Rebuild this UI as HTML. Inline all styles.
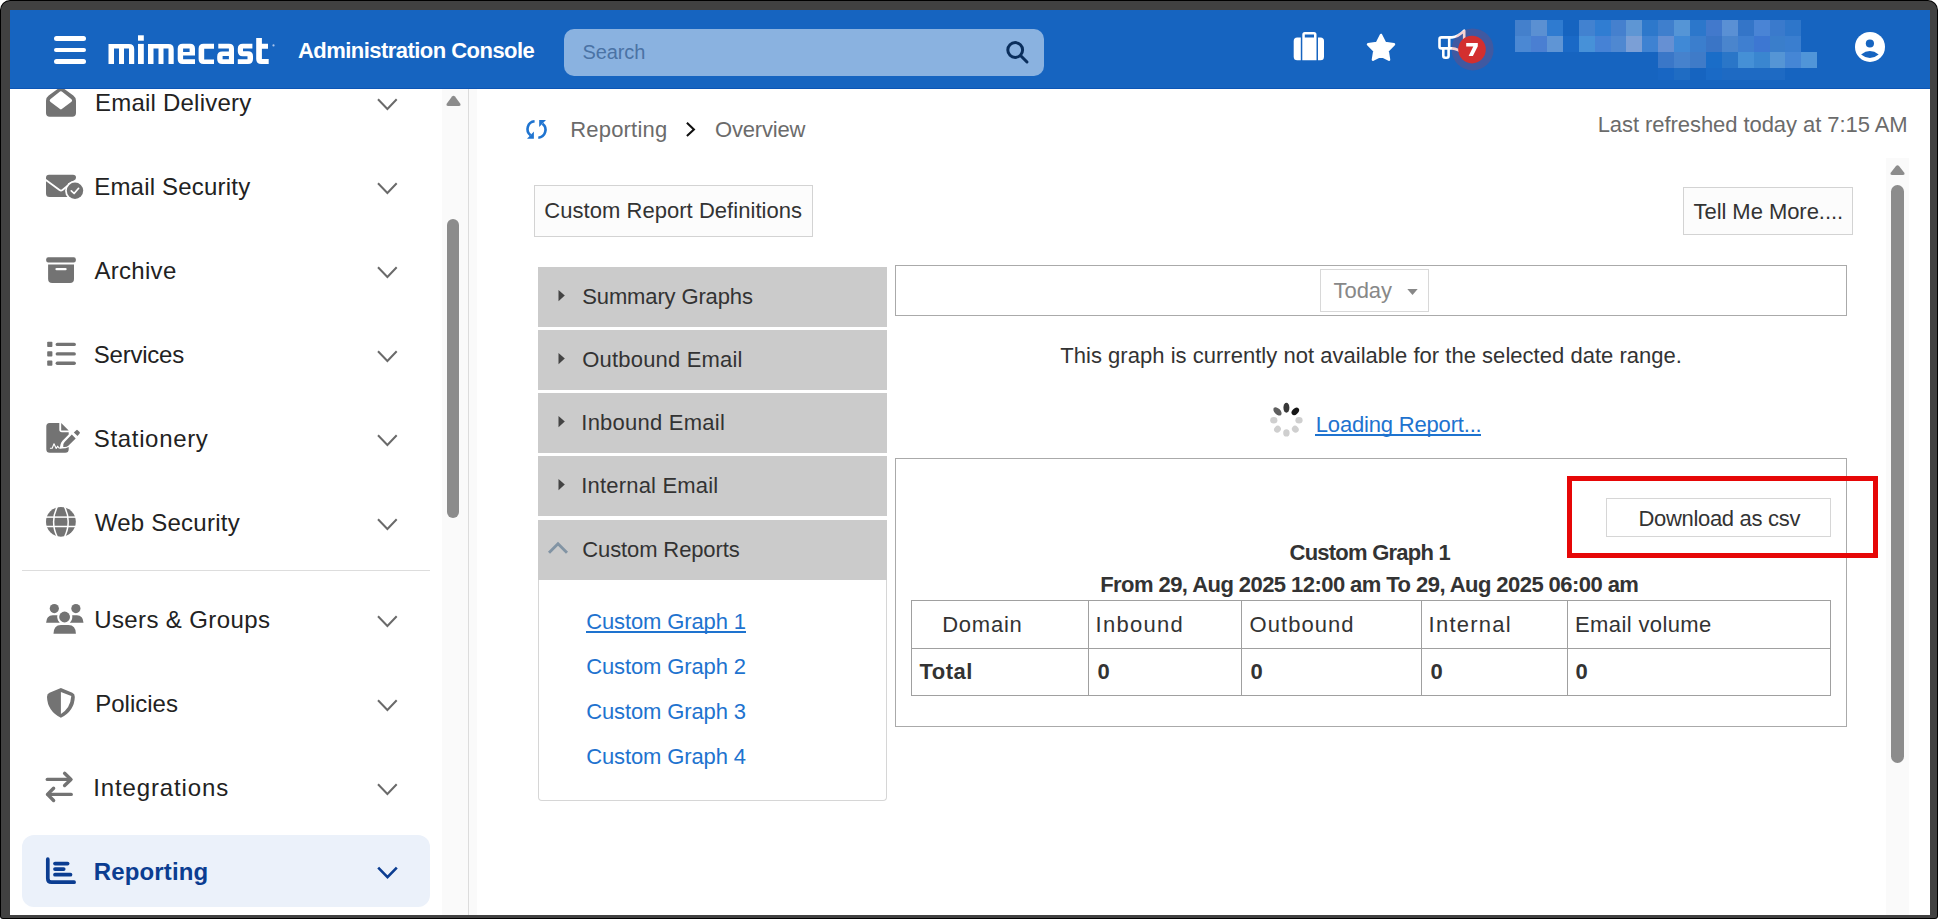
<!DOCTYPE html>
<html><head><meta charset="utf-8"><style>
html,body{margin:0;padding:0;width:1939px;height:920px;overflow:hidden;background:#fff;}
*{box-sizing:border-box;}
body{font-family:"Liberation Sans",sans-serif;position:relative;}
.abs{position:absolute;}
.t{position:absolute;white-space:pre;line-height:1;font-family:"Liberation Sans",sans-serif;}
svg{overflow:visible}
</style></head><body>
<div class="abs" style="left:0px;top:0px;width:1938px;height:919px;background:#000;border-radius:10px 10px 3px 3px"></div>
<div class="abs" style="left:1px;top:1px;width:1936px;height:917px;background:#414141;border-radius:9px 9px 2px 2px"></div>
<div class="abs" style="left:10px;top:10px;width:1920px;height:905px;background:#fff;"></div>
<div class="abs" style="left:10px;top:10px;width:1920px;height:79px;background:#1664c0;"></div>
<div class="abs" style="left:10px;top:88px;width:1920px;height:1px;background:#0c55b5;"></div>
<div class="abs" style="left:54px;top:36.2px;width:32px;height:4.7px;background:#fff;border-radius:3px"></div>
<div class="abs" style="left:54px;top:47.5px;width:32px;height:4.7px;background:#fff;border-radius:3px"></div>
<div class="abs" style="left:54px;top:58.9px;width:32px;height:4.7px;background:#fff;border-radius:3px"></div>
<svg class="abs" style="left:0px;top:0px" width="1" height="1" viewBox="0 0 1 1"><g fill="#fff">
<path d="M108.5,64 V43.9 H129 Q134.2,43.9 134.2,49 V64 H129 V48.6 H124 V64 H119 V48.6 H114 V64 Z"/>
<rect x="138" y="43.9" width="5.8" height="20.1"/><rect x="138" y="35.3" width="5.8" height="5.4"/>
<path transform="translate(39.5,0)" d="M108.5,64 V43.9 H129 Q134.2,43.9 134.2,49 V64 H129 V48.6 H124 V64 H119 V48.6 H114 V64 Z"/>
<path fill-rule="evenodd" d="M182.7,43.8 H190 Q195,43.8 195,48.8 V55.4 H183.1 V59.2 H195 V64.1 H182.7 Q177.7,64.1 177.7,59.1 V48.8 Q177.7,43.8 182.7,43.8 Z M183.1,48.4 H189.6 V51.9 H183.1 Z"/>
<path d="M203.6,43.8 H214 V48.7 H204.2 V59.5 H214 V64.1 H203.6 Q198.6,64.1 198.6,59.1 V48.8 Q198.6,43.8 203.6,43.8 Z"/>
<path fill-rule="evenodd" d="M218.3,43.8 H229 Q234,43.8 234,48.8 V64.1 H222.2 Q217.2,64.1 217.2,59.1 V56.5 Q217.2,51.6 222.2,51.6 H228.9 V48.6 H218.3 Z M222.6,56 H228.9 V59.2 H222.6 Z"/>
<path d="M242.8,43.8 H252.4 V48.4 H243 V51.2 H248 Q253,51.2 253,56.2 V59.1 Q253,64.1 248,64.1 H237.8 V59.2 H247.5 V56.2 H242.8 Q237.8,56.2 237.8,51.2 V48.8 Q237.8,43.8 242.8,43.8 Z"/>
<path d="M256.2,37.9 H261.9 V43.8 H268 V48.7 H261.9 V59 H268.7 V64.1 H261.2 Q256.2,64.1 256.2,59.1 Z"/>
</g><circle cx="273.5" cy="45.4" r="1.1" fill="#a9c4ec"/></svg>
<div class="t" style="left:297.90px;top:39.98px;font-size:22px;color:#fff;font-weight:bold;letter-spacing:-0.533px;">Administration Console</div>
<div class="abs" style="left:564px;top:29px;width:480px;height:47px;background:#8ab2e0;border-radius:10px"></div>
<div class="t" style="left:582.60px;top:41.97px;font-size:20px;color:#4a73a5;font-weight:normal;letter-spacing:-0.129px;">Search</div>
<svg class="abs" style="left:0px;top:0px" width="1" height="1" viewBox="0 0 1 1"><g stroke="#0a2e5c" stroke-width="3" fill="none" stroke-linecap="round"><circle cx="1015.2" cy="50" r="7.4"/><line x1="1021" y1="56" x2="1027" y2="62"/></g></svg>
<svg class="abs" style="left:0px;top:0px" width="1" height="1" viewBox="0 0 1 1"><g fill="#fff"><path d="M1297.2,37.6 H1300.8 V60.3 H1297.2 Q1293.7,60.3 1293.7,56.8 V41.1 Q1293.7,37.6 1297.2,37.6 Z"/><path d="M1318,37.6 H1320.5 Q1324,37.6 1324,41.1 V56.8 Q1324,60.3 1320.5,60.3 H1318 Z"/><path fill-rule="evenodd" d="M1304.8,31.9 H1314 Q1316.5,31.9 1316.5,34.4 V60.3 H1302.3 V34.4 Q1302.3,31.9 1304.8,31.9 Z M1304.8,34.6 H1314 V37.6 H1304.8 Z"/></g></svg>
<svg class="abs" style="left:0px;top:0px" width="1" height="1" viewBox="0 0 1 1"><polygon points="1381.00,35.00 1385.06,43.02 1393.93,44.40 1387.56,50.73 1388.99,59.60 1381.00,55.50 1373.01,59.60 1374.44,50.73 1368.07,44.40 1376.94,43.02" fill="#fff" stroke="#fff" stroke-width="2.6" stroke-linejoin="round"/></svg>
<svg class="abs" style="left:0px;top:0px" width="1" height="1" viewBox="0 0 1 1"><g fill="none" stroke="#fff" stroke-width="2.6" stroke-linejoin="round"><path d="M1441.5,37.4 H1452 Q1458,37 1464.2,30.6 V54 Q1458,49 1452,48.4 H1441.5 Q1439.5,48.4 1439.5,46.4 V39.4 Q1439.5,37.4 1441.5,37.4 Z"/><path d="M1443.3,48.4 V55.8 Q1443.3,57.8 1445.3,57.8 H1446.6 Q1448.6,57.8 1448.6,55.8 V48.4"/><line x1="1449.2" y1="37.4" x2="1449.2" y2="48.4"/></g></svg>
<svg class="abs" style="left:0px;top:0px" width="1" height="1" viewBox="0 0 1 1"><circle cx="1472.6" cy="49.4" r="21" fill="rgb(214,48,50)" fill-opacity="0.22"/><circle cx="1472" cy="49.6" r="13.8" fill="#d32f2f"/></svg>
<svg class="abs" style="left:0px;top:0px" width="1" height="1" viewBox="0 0 1 1"><path fill="#fff" d="M1466.2,43.1 H1477.8 V46.2 L1472.9,55.9 H1468.6 L1473.3,46.5 H1466.2 Z"/></svg>
<svg class="abs" style="left:0px;top:0px" width="1" height="1" viewBox="0 0 1 1"><g shape-rendering="crispEdges"><rect x="1515.10" y="20.10" width="15.9" height="15.9" fill="#4480cc"/><rect x="1531.00" y="20.10" width="15.9" height="15.9" fill="#5b90d2"/><rect x="1546.90" y="20.10" width="15.9" height="15.9" fill="#2f7bd0"/><rect x="1578.70" y="20.10" width="15.9" height="15.9" fill="#4282d0"/><rect x="1594.60" y="20.10" width="15.9" height="15.9" fill="#307dd2"/><rect x="1610.50" y="20.10" width="15.9" height="15.9" fill="#4580ce"/><rect x="1626.40" y="20.10" width="15.9" height="15.9" fill="#5e96d4"/><rect x="1642.30" y="20.10" width="15.9" height="15.9" fill="#2d78cb"/><rect x="1658.20" y="20.10" width="15.9" height="15.9" fill="#3f7fcd"/><rect x="1674.10" y="20.10" width="15.9" height="15.9" fill="#5595d6"/><rect x="1690.00" y="20.10" width="15.9" height="15.9" fill="#2c77cb"/><rect x="1705.90" y="20.10" width="15.9" height="15.9" fill="#4279cc"/><rect x="1721.80" y="20.10" width="15.9" height="15.9" fill="#5a90d4"/><rect x="1737.70" y="20.10" width="15.9" height="15.9" fill="#3475c8"/><rect x="1753.60" y="20.10" width="15.9" height="15.9" fill="#4a84d5"/><rect x="1769.50" y="20.10" width="15.9" height="15.9" fill="#3a7acc"/><rect x="1785.40" y="20.10" width="15.9" height="15.9" fill="#2e76ca"/><rect x="1515.10" y="36.00" width="15.9" height="15.9" fill="#4b88d3"/><rect x="1531.00" y="36.00" width="15.9" height="15.9" fill="#4a7fd2"/><rect x="1546.90" y="36.00" width="15.9" height="15.9" fill="#5f95d5"/><rect x="1562.80" y="36.00" width="15.9" height="15.9" fill="#1a69c6"/><rect x="1578.70" y="36.00" width="15.9" height="15.9" fill="#4791d8"/><rect x="1594.60" y="36.00" width="15.9" height="15.9" fill="#4682d5"/><rect x="1610.50" y="36.00" width="15.9" height="15.9" fill="#4f88d1"/><rect x="1626.40" y="36.00" width="15.9" height="15.9" fill="#7b9fd6"/><rect x="1642.30" y="36.00" width="15.9" height="15.9" fill="#3e82d2"/><rect x="1658.20" y="36.00" width="15.9" height="15.9" fill="#6690d3"/><rect x="1674.10" y="36.00" width="15.9" height="15.9" fill="#4089d6"/><rect x="1690.00" y="36.00" width="15.9" height="15.9" fill="#3b7ecd"/><rect x="1705.90" y="36.00" width="15.9" height="15.9" fill="#3a75c6"/><rect x="1721.80" y="36.00" width="15.9" height="15.9" fill="#4a85cd"/><rect x="1737.70" y="36.00" width="15.9" height="15.9" fill="#3f7fd0"/><rect x="1753.60" y="36.00" width="15.9" height="15.9" fill="#3d77d2"/><rect x="1769.50" y="36.00" width="15.9" height="15.9" fill="#3a7ecb"/><rect x="1785.40" y="36.00" width="15.9" height="15.9" fill="#3a7ecf"/><rect x="1658.20" y="51.90" width="15.9" height="15.9" fill="#3a77c8"/><rect x="1674.10" y="51.90" width="15.9" height="15.9" fill="#4682cd"/><rect x="1690.00" y="51.90" width="15.9" height="15.9" fill="#3f7bc8"/><rect x="1705.90" y="51.90" width="15.9" height="15.9" fill="#1a6dc8"/><rect x="1721.80" y="51.90" width="15.9" height="15.9" fill="#2a76c8"/><rect x="1737.70" y="51.90" width="15.9" height="15.9" fill="#4590d6"/><rect x="1753.60" y="51.90" width="15.9" height="15.9" fill="#3a86d0"/><rect x="1769.50" y="51.90" width="15.9" height="15.9" fill="#5595d5"/><rect x="1785.40" y="51.90" width="15.9" height="15.9" fill="#4586d5"/><rect x="1801.30" y="51.90" width="15.9" height="15.9" fill="#5095d8"/><rect x="1658.20" y="67.80" width="15.9" height="12" fill="#1866c3"/><rect x="1674.10" y="67.80" width="15.9" height="12" fill="#1f6cc3"/><rect x="1705.90" y="67.80" width="15.9" height="12" fill="#1a6ac6"/><rect x="1721.80" y="67.80" width="15.9" height="12" fill="#1e6ac3"/><rect x="1737.70" y="67.80" width="15.9" height="12" fill="#1e6ac3"/><rect x="1753.60" y="67.80" width="15.9" height="12" fill="#1e6ac3"/><rect x="1769.50" y="67.80" width="15.9" height="12" fill="#1e6ac3"/></g></svg>
<svg class="abs" style="left:0px;top:0px" width="1" height="1" viewBox="0 0 1 1"><circle cx="1870" cy="46.9" r="15" fill="#fff"/><circle cx="1869.9" cy="43.5" r="4.1" fill="#1664c0"/><path fill="#1664c0" d="M1861.1,54.4 Q1869.9,47.5 1878.7,54.4 Q1869.9,61.5 1861.1,54.4 Z"/></svg>
<div class="abs" style="left:22px;top:835px;width:408px;height:72px;background:#ebf1fa;border-radius:12px"></div>
<div class="t" style="left:95.00px;top:90.58px;font-size:24px;color:#222;font-weight:normal;letter-spacing:0.218px;">Email Delivery</div>
<div class="t" style="left:94.20px;top:174.58px;font-size:24px;color:#222;font-weight:normal;letter-spacing:0.202px;">Email Security</div>
<div class="t" style="left:94.40px;top:258.58px;font-size:24px;color:#222;font-weight:normal;letter-spacing:0.303px;">Archive</div>
<div class="t" style="left:93.80px;top:342.58px;font-size:24px;color:#222;font-weight:normal;letter-spacing:-0.232px;">Services</div>
<div class="t" style="left:93.80px;top:426.58px;font-size:24px;color:#222;font-weight:normal;letter-spacing:0.660px;">Stationery</div>
<div class="t" style="left:94.70px;top:510.58px;font-size:24px;color:#222;font-weight:normal;letter-spacing:0.248px;">Web Security</div>
<div class="t" style="left:94.20px;top:607.58px;font-size:24px;color:#222;font-weight:normal;letter-spacing:0.383px;">Users &amp; Groups</div>
<div class="t" style="left:95.20px;top:691.58px;font-size:24px;color:#222;font-weight:normal;letter-spacing:0.014px;">Policies</div>
<div class="t" style="left:93.20px;top:775.58px;font-size:24px;color:#222;font-weight:normal;letter-spacing:0.871px;">Integrations</div>
<div class="t" style="left:93.80px;top:859.58px;font-size:24px;color:#0b3d91;font-weight:bold;letter-spacing:0.130px;">Reporting</div>
<div class="abs" style="left:22px;top:570px;width:408px;height:1px;background:#dddddd;"></div>
<div class="abs" style="left:442px;top:89px;width:26px;height:826px;background:#fafafa;"></div>
<div class="abs" style="left:468px;top:89px;width:1px;height:826px;background:#dcdcdc;"></div>
<div class="abs" style="left:469px;top:89px;width:8px;height:826px;background:#fafafa;"></div>
<div class="abs" style="left:447px;top:219px;width:12px;height:299px;background:#8c8c8c;border-radius:6px"></div>
<svg class="abs" style="left:0px;top:0px" width="1" height="1" viewBox="0 0 1 1"><polyline points="378,99.3 387.4,109.0 396.7,99.3" fill="none" stroke="#6a6a6a" stroke-width="2"/></svg>
<svg class="abs" style="left:0px;top:0px" width="1" height="1" viewBox="0 0 1 1"><polyline points="378,183.3 387.4,193.0 396.7,183.3" fill="none" stroke="#6a6a6a" stroke-width="2"/></svg>
<svg class="abs" style="left:0px;top:0px" width="1" height="1" viewBox="0 0 1 1"><polyline points="378,267.3 387.4,277.0 396.7,267.3" fill="none" stroke="#6a6a6a" stroke-width="2"/></svg>
<svg class="abs" style="left:0px;top:0px" width="1" height="1" viewBox="0 0 1 1"><polyline points="378,351.3 387.4,361.0 396.7,351.3" fill="none" stroke="#6a6a6a" stroke-width="2"/></svg>
<svg class="abs" style="left:0px;top:0px" width="1" height="1" viewBox="0 0 1 1"><polyline points="378,435.3 387.4,445.0 396.7,435.3" fill="none" stroke="#6a6a6a" stroke-width="2"/></svg>
<svg class="abs" style="left:0px;top:0px" width="1" height="1" viewBox="0 0 1 1"><polyline points="378,519.3 387.4,529.0 396.7,519.3" fill="none" stroke="#6a6a6a" stroke-width="2"/></svg>
<svg class="abs" style="left:0px;top:0px" width="1" height="1" viewBox="0 0 1 1"><polyline points="378,616.3 387.4,626.0 396.7,616.3" fill="none" stroke="#6a6a6a" stroke-width="2"/></svg>
<svg class="abs" style="left:0px;top:0px" width="1" height="1" viewBox="0 0 1 1"><polyline points="378,700.3 387.4,710.0 396.7,700.3" fill="none" stroke="#6a6a6a" stroke-width="2"/></svg>
<svg class="abs" style="left:0px;top:0px" width="1" height="1" viewBox="0 0 1 1"><polyline points="378,784.3 387.4,794.0 396.7,784.3" fill="none" stroke="#6a6a6a" stroke-width="2"/></svg>
<svg class="abs" style="left:0px;top:0px" width="1" height="1" viewBox="0 0 1 1"><polyline points="378.2,867.6 387.5,877.2 396.8,867.6" fill="none" stroke="#0b3d91" stroke-width="2.6"/></svg>
<svg class="abs" style="left:0px;top:0px" width="1" height="1" viewBox="0 0 1 1"><path fill="#737373" fill-rule="evenodd" d="M57.6,89 H64.4 L73.3,95.6 Q76,97.6 76,100.8 V113 Q76,116.7 72.3,116.7 H49.7 Q46,116.7 46,113 V100.8 Q46,97.6 48.7,95.6 Z M50.3,99.3 Q49,100.6 50.3,101.8 L60,109.1 Q60.9,109.8 61.8,109.1 L71.5,101.8 Q72.8,100.6 71.5,99.3 L61.8,91.6 Q60.9,90.9 60,91.6 Z"/></svg>
<svg class="abs" style="left:0px;top:0px" width="1" height="1" viewBox="0 0 1 1"><path fill="#737373" d="M49,174.8 H73 Q76,174.8 76,177.6 Q76,179.5 74.3,180.3 L68,183.5 V197 H49.5 Q46,197 46,193.5 V177.8 Q46,174.8 49,174.8 Z"/><path d="M45.5,179.8 L59.5,190 Q61,191 62.5,190 L68,185.5" fill="none" stroke="#fff" stroke-width="1.8"/><circle cx="75" cy="190.7" r="9.9" fill="#fff"/><circle cx="75" cy="190.7" r="8.2" fill="#737373"/><polyline points="71.3,190.8 74.1,193.5 78.6,188.3" fill="none" stroke="#fff" stroke-width="1.7" stroke-linecap="round" stroke-linejoin="round"/></svg>
<svg class="abs" style="left:0px;top:0px" width="1" height="1" viewBox="0 0 1 1"><rect x="46.2" y="257.2" width="29.6" height="5.3" rx="2" fill="#737373"/><path fill="#737373" d="M48.1,264.4 H74 V279 Q74,283 70,283 H52.1 Q48.1,283 48.1,279 Z"/><rect x="55.4" y="267.9" width="11.3" height="2.4" rx="1.2" fill="#fff"/></svg>
<svg class="abs" style="left:0px;top:0px" width="1" height="1" viewBox="0 0 1 1"><rect x="47.2" y="341.8" width="5.2" height="5.2" rx="0.8" fill="#737373"/><line x1="57.3" y1="344.4" x2="74.2" y2="344.4" stroke="#737373" stroke-width="3.4" stroke-linecap="round"/></svg>
<svg class="abs" style="left:0px;top:0px" width="1" height="1" viewBox="0 0 1 1"><rect x="47.2" y="351.3" width="5.2" height="5.2" rx="0.8" fill="#737373"/><line x1="57.3" y1="353.9" x2="74.2" y2="353.9" stroke="#737373" stroke-width="3.4" stroke-linecap="round"/></svg>
<svg class="abs" style="left:0px;top:0px" width="1" height="1" viewBox="0 0 1 1"><rect x="47.2" y="360.6" width="5.2" height="5.2" rx="0.8" fill="#737373"/><line x1="57.3" y1="363.2" x2="74.2" y2="363.2" stroke="#737373" stroke-width="3.4" stroke-linecap="round"/></svg>
<svg class="abs" style="left:0px;top:0px" width="1" height="1" viewBox="0 0 1 1"><path fill="#737373" d="M49.5,423 H59.3 V429.6 Q59.3,432.3 62,432.3 H68.7 V434.6 L62.5,440.8 Q61,442.5 60.5,444.5 L59.7,448.4 Q65,449 68.7,447 V449.3 Q68.7,452.8 65.2,452.8 H49.8 Q46.3,452.8 46.3,449.3 V426.5 Q46.3,423 49.5,423 Z"/><path fill="#737373" d="M61.2,423 L68.7,430.4 H61.2 Z"/><path fill="#737373" d="M71.8,434.6 L75.7,438.5 L68.3,445.7 Q66.2,447.6 63.2,446.9 Q62.6,443.9 64.6,441.9 Z"/><path fill="#737373" d="M73.8,432.5 L76.3,430.2 Q77,429.5 77.7,430.2 L79.6,432.1 Q80.3,432.8 79.6,433.5 L77.5,436 Z"/><path d="M50.4,448.2 H52.2 L54,443.7 L56.2,448.4 L57.6,446.2 L59,448 H61" fill="none" stroke="#fff" stroke-width="1.1" stroke-linejoin="round" stroke-linecap="round"/></svg>
<svg class="abs" style="left:0px;top:0px" width="1" height="1" viewBox="0 0 1 1"><circle cx="60.9" cy="521.8" r="14.9" fill="#737373"/><g stroke="#fff" stroke-width="1.5" fill="none"><line x1="45" y1="517.1" x2="77" y2="517.1"/><line x1="45" y1="526.5" x2="77" y2="526.5"/><path d="M57.2,506.8 Q53.6,514 53.6,521.8 Q53.6,529.6 57.2,536.8"/><path d="M64.6,506.8 Q68.2,514 68.2,521.8 Q68.2,529.6 64.6,536.8"/></g></svg>
<svg class="abs" style="left:0px;top:0px" width="1" height="1" viewBox="0 0 1 1"><circle cx="54.3" cy="608.6" r="4.6" fill="#737373"/><circle cx="75.9" cy="608.6" r="4.6" fill="#737373"/><path fill="#737373" d="M46.1,622.7 Q46.5,615 53,615.2 H57.4 Q56.6,619.5 59.8,622.7 Z"/><path fill="#737373" d="M83.5,622.7 Q83.1,615 76.6,615.2 H72.2 Q73,619.5 69.8,622.7 Z"/><circle cx="64.6" cy="617" r="6.9" fill="#fff"/><circle cx="64.6" cy="617" r="5.4" fill="#737373"/><path fill="#737373" d="M53.5,633.8 Q53.6,625 61,625 H68.4 Q75.8,625 75.9,633.8 Z"/></svg>
<svg class="abs" style="left:0px;top:0px" width="1" height="1" viewBox="0 0 1 1"><path fill="#737373" fill-rule="evenodd" d="M60.9,688 L72.3,692.8 Q74.9,693.9 74.8,697 Q74.4,711 60.9,717.8 Q47.4,711 47,697 Q46.9,693.9 49.5,692.8 Z M60.9,692 V714 Q70.5,708 71.3,696 Z"/></svg>
<svg class="abs" style="left:0px;top:0px" width="1" height="1" viewBox="0 0 1 1"><g stroke="#737373" stroke-width="3.4" stroke-linecap="round" stroke-linejoin="round" fill="none"><line x1="47.3" y1="779.4" x2="70.5" y2="779.4"/><polyline points="64.6,773.3 71,779.4 64.6,785.5"/><line x1="48" y1="794.4" x2="71.2" y2="794.4"/><polyline points="53.6,788.3 47.5,794.4 53.6,800.5"/></g></svg>
<svg class="abs" style="left:0px;top:0px" width="1" height="1" viewBox="0 0 1 1"><g stroke="#0b3d91" stroke-width="3.7" stroke-linecap="round" fill="none"><path d="M47.8,859.2 V878.5 Q47.8,882.2 51.5,882.2 H74.1"/><line x1="55" y1="863.6" x2="67.6" y2="863.6"/><line x1="55" y1="869.1" x2="63.7" y2="869.1"/><line x1="55" y1="874.7" x2="70.5" y2="874.7"/></g></svg>
<svg class="abs" style="left:0px;top:0px" width="1" height="1" viewBox="0 0 1 1"><path fill="#8c8c8c" d="M452,96.5 Q453.5,95 455,96.5 L460.5,104 Q461,106 459,106 H448 Q446,106 446.5,104 Z"/></svg>
<div class="abs" style="left:477px;top:89px;width:1409px;height:826px;background:#fff;"></div>
<svg class="abs" style="left:0px;top:0px" width="1" height="1" viewBox="0 0 1 1"><g fill="none" stroke="#1f74d0" stroke-width="2.6"><path d="M534.6,121.3 A7.8,7.8 0 0 0 530.5,135.2"/><path d="M538.3,137.7 A7.8,7.8 0 0 0 542.5,123.8"/></g><path fill="#1f74d0" d="M533.9,131.5 V138.8 H527 Z"/><path fill="#1f74d0" d="M539.2,127 V119.9 H546 Z"/></svg>
<div class="t" style="left:570.30px;top:118.88px;font-size:22px;color:#6b6b6b;font-weight:normal;letter-spacing:0.181px;">Reporting</div>
<svg class="abs" style="left:0px;top:0px" width="1" height="1" viewBox="0 0 1 1"><polyline points="686.9,122.8 693.9,129.4 686.9,136" fill="none" stroke="#111" stroke-width="2.1"/></svg>
<div class="t" style="left:715.10px;top:118.88px;font-size:22px;color:#6b6b6b;font-weight:normal;letter-spacing:-0.200px;">Overview</div>
<div class="t" style="left:1597.70px;top:114.18px;font-size:22px;color:#6b6b6b;font-weight:normal;letter-spacing:-0.065px;">Last refreshed today at 7:15 AM</div>
<div class="abs" style="left:534px;top:185px;width:279px;height:52px;background:#fcfcfc;border:1px solid #d3d3d3"></div>
<div class="t" style="left:544.30px;top:199.98px;font-size:22px;color:#333;font-weight:normal;letter-spacing:0.039px;">Custom Report Definitions</div>
<div class="abs" style="left:1683px;top:187px;width:170px;height:48px;background:#fcfcfc;border:1px solid #d3d3d3"></div>
<div class="t" style="left:1693.50px;top:201.18px;font-size:22px;color:#333;font-weight:normal;letter-spacing:-0.050px;">Tell Me More....</div>
<div class="abs" style="left:538px;top:267px;width:349px;height:60px;background:#cbcbcb;"></div>
<div class="t" style="left:582.30px;top:285.78px;font-size:22px;color:#333;font-weight:normal;letter-spacing:-0.137px;">Summary Graphs</div>
<svg class="abs" style="left:0px;top:0px" width="1" height="1" viewBox="0 0 1 1"><path fill="#444" d="M558.5,290 L564.8,295.6 L558.5,301.2 Z"/></svg>
<div class="abs" style="left:538px;top:330px;width:349px;height:60px;background:#cbcbcb;"></div>
<div class="t" style="left:582.30px;top:348.78px;font-size:22px;color:#333;font-weight:normal;letter-spacing:0.187px;">Outbound Email</div>
<svg class="abs" style="left:0px;top:0px" width="1" height="1" viewBox="0 0 1 1"><path fill="#444" d="M558.5,353 L564.8,358.6 L558.5,364.2 Z"/></svg>
<div class="abs" style="left:538px;top:393px;width:349px;height:60px;background:#cbcbcb;"></div>
<div class="t" style="left:581.30px;top:411.98px;font-size:22px;color:#333;font-weight:normal;letter-spacing:0.237px;">Inbound Email</div>
<svg class="abs" style="left:0px;top:0px" width="1" height="1" viewBox="0 0 1 1"><path fill="#444" d="M558.5,416 L564.8,421.6 L558.5,427.2 Z"/></svg>
<div class="abs" style="left:538px;top:456px;width:349px;height:60px;background:#cbcbcb;"></div>
<div class="t" style="left:581.30px;top:475.28px;font-size:22px;color:#333;font-weight:normal;letter-spacing:0.183px;">Internal Email</div>
<svg class="abs" style="left:0px;top:0px" width="1" height="1" viewBox="0 0 1 1"><path fill="#444" d="M558.5,479 L564.8,484.6 L558.5,490.2 Z"/></svg>
<div class="abs" style="left:538px;top:520px;width:349px;height:60px;background:#cbcbcb;"></div>
<div class="t" style="left:582.30px;top:538.78px;font-size:22px;color:#333;font-weight:normal;letter-spacing:-0.119px;">Custom Reports</div>
<svg class="abs" style="left:0px;top:0px" width="1" height="1" viewBox="0 0 1 1"><polyline points="549,552.8 558,543.8 567,552.8" fill="none" stroke="#8294a4" stroke-width="2.9"/></svg>
<div class="abs" style="left:538px;top:580px;width:349px;height:221px;background:#fff;border:1px solid #d6d6d6;border-top:none;border-radius:0 0 4px 4px"></div>
<div class="t" style="left:586.20px;top:611.18px;font-size:22px;color:#1e73cf;font-weight:normal;letter-spacing:-0.120px;">Custom Graph 1</div>
<div class="t" style="left:586.20px;top:656.18px;font-size:22px;color:#1e73cf;font-weight:normal;letter-spacing:-0.120px;">Custom Graph 2</div>
<div class="t" style="left:586.20px;top:701.18px;font-size:22px;color:#1e73cf;font-weight:normal;letter-spacing:-0.120px;">Custom Graph 3</div>
<div class="t" style="left:586.20px;top:746.18px;font-size:22px;color:#1e73cf;font-weight:normal;letter-spacing:-0.120px;">Custom Graph 4</div>
<div class="abs" style="left:586px;top:631px;width:160px;height:2px;background:#1e73cf;"></div>
<div class="abs" style="left:895px;top:265px;width:952px;height:51px;background:#fff;border:1px solid #aaaaaa"></div>
<div class="abs" style="left:1320px;top:269px;width:109px;height:43px;background:#fff;border:1px solid #d8d8d8"></div>
<div class="t" style="left:1333.50px;top:280.08px;font-size:22px;color:#888;font-weight:normal;letter-spacing:-0.052px;">Today</div>
<svg class="abs" style="left:0px;top:0px" width="1" height="1" viewBox="0 0 1 1"><path fill="#888" d="M1407.3,289 H1417.7 L1412.5,294.9 Z"/></svg>
<div class="t" style="left:1060.30px;top:344.98px;font-size:22px;color:#333;font-weight:normal;letter-spacing:0.025px;">This graph is currently not available for the selected date range.</div>
<svg class="abs" style="left:0px;top:0px" width="1" height="1" viewBox="0 0 1 1"><defs><filter id="bl" x="-50%" y="-50%" width="200%" height="200%"><feGaussianBlur stdDeviation="0.55"/></filter></defs><g filter="url(#bl)"><ellipse cx="1286.40" cy="407.70" rx="3.0" ry="5.0" fill="#383838" transform="rotate(0 1286.40 407.70)"/><ellipse cx="1295.31" cy="411.39" rx="2.9" ry="4.4" fill="#151515" transform="rotate(45 1295.31 411.39)"/><ellipse cx="1299.00" cy="420.30" rx="3.2" ry="3.6" fill="#cfcfcf" transform="rotate(90 1299.00 420.30)"/><ellipse cx="1295.31" cy="429.21" rx="3.2" ry="3.6" fill="#cfcfcf" transform="rotate(135 1295.31 429.21)"/><ellipse cx="1286.40" cy="432.90" rx="3.2" ry="3.6" fill="#cfcfcf" transform="rotate(180 1286.40 432.90)"/><ellipse cx="1277.49" cy="429.21" rx="3.2" ry="3.6" fill="#cfcfcf" transform="rotate(225 1277.49 429.21)"/><ellipse cx="1273.80" cy="420.30" rx="3.2" ry="3.6" fill="#cfcfcf" transform="rotate(270 1273.80 420.30)"/><ellipse cx="1277.49" cy="411.39" rx="3.0" ry="5.0" fill="#5e5e5e" transform="rotate(315 1277.49 411.39)"/></g></svg>
<div class="t" style="left:1315.80px;top:413.88px;font-size:22px;color:#1e73cf;font-weight:normal;letter-spacing:-0.179px;">Loading Report...</div>
<div class="abs" style="left:1315px;top:434px;width:166px;height:2px;background:#1e73cf;"></div>
<div class="abs" style="left:895px;top:458px;width:952px;height:269px;background:#fff;border:1px solid #aaaaaa"></div>
<div class="abs" style="left:1606px;top:498px;width:225px;height:39px;background:#fff;border:1px solid #d6d6d6"></div>
<div class="t" style="left:1638.40px;top:508.18px;font-size:22px;color:#333;font-weight:normal;letter-spacing:-0.307px;">Download as csv</div>
<div class="abs" style="left:1567px;top:476px;width:311px;height:82px;background:transparent;border:5px solid #e60707"></div>
<div class="t" style="left:1289.60px;top:541.68px;font-size:22px;color:#333;font-weight:bold;letter-spacing:-0.777px;">Custom Graph 1</div>
<div class="t" style="left:1100.20px;top:573.98px;font-size:22px;color:#333;font-weight:bold;letter-spacing:-0.557px;">From 29, Aug 2025 12:00 am To 29, Aug 2025 06:00 am</div>
<div class="abs" style="left:911px;top:600px;width:920px;height:96px;background:#fff;border:1px solid #a0a0a0"></div>
<div class="abs" style="left:911px;top:648px;width:920px;height:1px;background:#a0a0a0;"></div>
<div class="abs" style="left:1088px;top:600px;width:1px;height:96px;background:#a0a0a0;"></div>
<div class="abs" style="left:1241px;top:600px;width:1px;height:96px;background:#a0a0a0;"></div>
<div class="abs" style="left:1421px;top:600px;width:1px;height:96px;background:#a0a0a0;"></div>
<div class="abs" style="left:1567px;top:600px;width:1px;height:96px;background:#a0a0a0;"></div>
<div class="t" style="left:942.20px;top:614.28px;font-size:22px;color:#333;font-weight:normal;letter-spacing:0.766px;">Domain</div>
<div class="t" style="left:1095.50px;top:614.28px;font-size:22px;color:#333;font-weight:normal;letter-spacing:1.285px;">Inbound</div>
<div class="t" style="left:1249.50px;top:614.28px;font-size:22px;color:#333;font-weight:normal;letter-spacing:1.057px;">Outbound</div>
<div class="t" style="left:1428.60px;top:614.28px;font-size:22px;color:#333;font-weight:normal;letter-spacing:1.230px;">Internal</div>
<div class="t" style="left:1575.00px;top:614.28px;font-size:22px;color:#333;font-weight:normal;letter-spacing:0.381px;">Email volume</div>
<div class="t" style="left:919.60px;top:661.08px;font-size:22px;color:#333;font-weight:bold;letter-spacing:0.449px;">Total</div>
<div class="t" style="left:1097.50px;top:661.08px;font-size:22px;color:#333;font-weight:bold;letter-spacing:0.000px;">0</div>
<div class="t" style="left:1250.50px;top:661.08px;font-size:22px;color:#333;font-weight:bold;letter-spacing:0.000px;">0</div>
<div class="t" style="left:1430.60px;top:661.08px;font-size:22px;color:#333;font-weight:bold;letter-spacing:0.000px;">0</div>
<div class="t" style="left:1575.50px;top:661.08px;font-size:22px;color:#333;font-weight:bold;letter-spacing:0.000px;">0</div>
<div class="abs" style="left:1886px;top:158px;width:23px;height:757px;background:#fafafa;"></div>
<svg class="abs" style="left:0px;top:0px" width="1" height="1" viewBox="0 0 1 1"><path fill="#8c8c8c" d="M1896,166 Q1897.5,164.5 1899,166 L1904.5,173 Q1905,175 1903,175 H1892 Q1890,175 1890.5,173 Z"/></svg>
<div class="abs" style="left:1891px;top:185px;width:13px;height:578px;background:#8c8c8c;border-radius:6.5px"></div></body></html>
